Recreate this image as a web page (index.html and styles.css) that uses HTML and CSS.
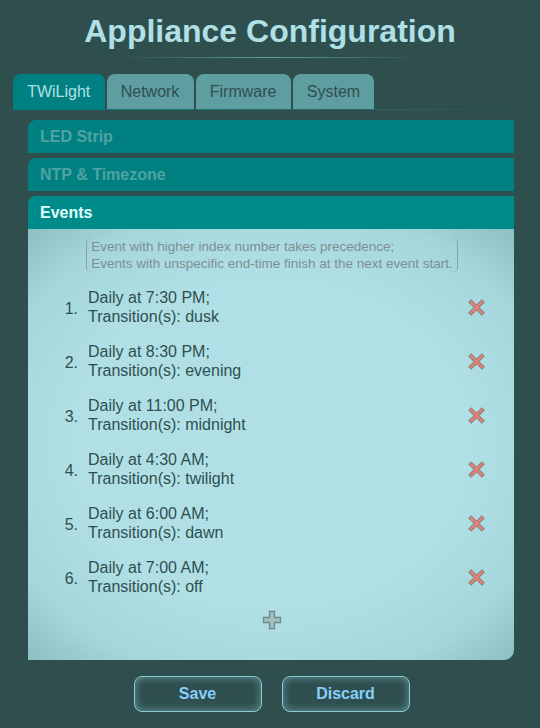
FILE: index.html
```html
<!DOCTYPE html>
<html>
<head>
<meta charset="utf-8">
<link rel="stylesheet" href="styles.css">
</head>
<body>
<div class="page">
  <h1 class="title">Appliance Configuration</h1>
  <div class="title-rule"></div>
  <div class="tabs">
    <div class="tab active">TWiLight</div>
    <div class="tab">Network</div>
    <div class="tab">Firmware</div>
    <div class="tab">System</div>
  </div>
  <div class="tab-rule"></div>
  <div class="sections">
    <div class="section-head">LED Strip</div>
    <div class="section-head">NTP &amp; Timezone</div>
    <div class="section-head open">Events</div>
    <div class="section-body">
      <div class="note-wrap">
        <div class="note">Event with higher index number takes precedence;<br>Events with unspecific end-time finish at the next event start.</div>
      </div>
      <ol class="events">
        <li class="event"><span class="num">1.</span><span class="desc">Daily at 7:30 PM;<br>Transition(s): dusk</span><svg class="del" viewBox="0 0 16 16"><path class="del-o" d="M3 3L13 13M13 3L3 13"/><path class="del-i" d="M3 3L13 13M13 3L3 13"/></svg></li>
        <li class="event"><span class="num">2.</span><span class="desc">Daily at 8:30 PM;<br>Transition(s): evening</span><svg class="del" viewBox="0 0 16 16"><path class="del-o" d="M3 3L13 13M13 3L3 13"/><path class="del-i" d="M3 3L13 13M13 3L3 13"/></svg></li>
        <li class="event"><span class="num">3.</span><span class="desc">Daily at 11:00 PM;<br>Transition(s): midnight</span><svg class="del" viewBox="0 0 16 16"><path class="del-o" d="M3 3L13 13M13 3L3 13"/><path class="del-i" d="M3 3L13 13M13 3L3 13"/></svg></li>
        <li class="event"><span class="num">4.</span><span class="desc">Daily at 4:30 AM;<br>Transition(s): twilight</span><svg class="del" viewBox="0 0 16 16"><path class="del-o" d="M3 3L13 13M13 3L3 13"/><path class="del-i" d="M3 3L13 13M13 3L3 13"/></svg></li>
        <li class="event"><span class="num">5.</span><span class="desc">Daily at 6:00 AM;<br>Transition(s): dawn</span><svg class="del" viewBox="0 0 16 16"><path class="del-o" d="M3 3L13 13M13 3L3 13"/><path class="del-i" d="M3 3L13 13M13 3L3 13"/></svg></li>
        <li class="event"><span class="num">6.</span><span class="desc">Daily at 7:00 AM;<br>Transition(s): off</span><svg class="del" viewBox="0 0 16 16"><path class="del-o" d="M3 3L13 13M13 3L3 13"/><path class="del-i" d="M3 3L13 13M13 3L3 13"/></svg></li>
      </ol>
      <div class="add-row">
        <svg class="add" viewBox="0 0 20 20"><path d="M7.5 1.5h5v6h6v5h-6v6h-5v-6h-6v-5h6z"/></svg>
      </div>
    </div>
  </div>
  <div class="buttons">
    <button class="btn">Save</button>
    <button class="btn">Discard</button>
  </div>
</div>
</body>
</html>
```
FILE: styles.css
```css
html, body {
  margin: 0;
  padding: 0;
  background: #2f4f4f;
  font-family: "Liberation Sans", Arial, sans-serif;
}

.page {
  width: 540px;
  height: 728px;
  overflow: hidden;
}

.title {
  margin: 11px 0 0;
  font-size: 32px;
  line-height: 40px;
  font-weight: bold;
  text-align: center;
  color: #b0e0e6;
}

.title-rule {
  width: 300px;
  height: 1px;
  margin: 6px auto 0;
  background: linear-gradient(to right, rgba(95,158,160,0), #5f9ea0 50%, rgba(95,158,160,0));
}

.tabs {
  display: flex;
  gap: 2px;
  margin: 16px 13px 0;
}

.tab {
  height: 35px;
  line-height: 36px;
  padding: 0 14.2px;
  border-radius: 8px 8px 0 0;
  background: #5f9ea0;
  color: #2f4f4f;
  font-size: 16px;
}

.tab.active {
  background: #008080;
  color: #b0e0e6;
}

.tab-rule {
  height: 1px;
  margin: 0 13px;
  background: linear-gradient(to right, #008080, #2a6a6a 60%, rgba(47,79,79,0));
}

.sections {
  margin: 10px 26px 0 28px;
}

.section-head {
  height: 33px;
  line-height: 34px;
  margin-bottom: 5px;
  padding-left: 12px;
  border-radius: 8px 0 0 0;
  background: #008080;
  color: #4fa3a3;
  font-size: 16px;
  font-weight: bold;
}

.section-head.open {
  margin-bottom: 0;
  background: #008b8b;
  color: #e0ffff;
}

.section-body {
  height: 431px;
  box-sizing: border-box;
  padding: 9px 29px 0 30px;
  border-radius: 0 0 10px 0;
  background: radial-gradient(ellipse 75% 70% at 50% 50%, #b0e0e6 55%, #a4d6dc 80%, #88bdc0 100%);
}

.note-wrap {
  display: flex;
  justify-content: center;
}

.note {
  padding: 0 4px;
  border-left: 1px solid #8b9ea3;
  border-right: 1px solid #8b9ea3;
  border-radius: 5px;
  color: #7f8e93;
  font-size: 13.5px;
  line-height: 17px;
  margin-left: 1px;
}

.events {
  list-style: none;
  margin: 16px 0 0;
  padding: 0;
  display: flex;
  flex-direction: column;
  gap: 16px;
}

.event {
  display: flex;
  align-items: center;
  color: #2f4f4f;
  font-size: 16px;
  line-height: 19px;
}

.num {
  width: 20px;
  text-align: right;
  margin-right: 10px;
  position: relative;
  top: 1px;
}

.desc {
  flex: 1;
}

.del {
  width: 17px;
  height: 17px;
  fill: none;
  stroke-linecap: square;
  margin-top: 1px;
}

.del-o {
  stroke: #8d7f7d;
  stroke-width: 4;
}

.del-i {
  stroke: #e08274;
  stroke-width: 2.2;
}

.add-row {
  display: flex;
  justify-content: center;
  margin-top: 14px;
  padding-left: 1px;
}

.add {
  width: 20px;
  height: 20px;
  fill: #a4bfc2;
  stroke: #6f898d;
  stroke-width: 1.3;
}

.buttons {
  display: flex;
  justify-content: center;
  gap: 20px;
  margin: 16px 0 0 3px;
}

.btn {
  width: 128px;
  height: 36px;
  border: 1px solid #8ccbd3;
  border-radius: 8px;
  background: #2f4f4f;
  box-shadow: inset 0 0 8px rgba(150, 210, 220, 0.55);
  color: #87cefa;
  font-family: "Liberation Sans", Arial, sans-serif;
  font-size: 16px;
  font-weight: bold;
  padding: 0;
}
```
